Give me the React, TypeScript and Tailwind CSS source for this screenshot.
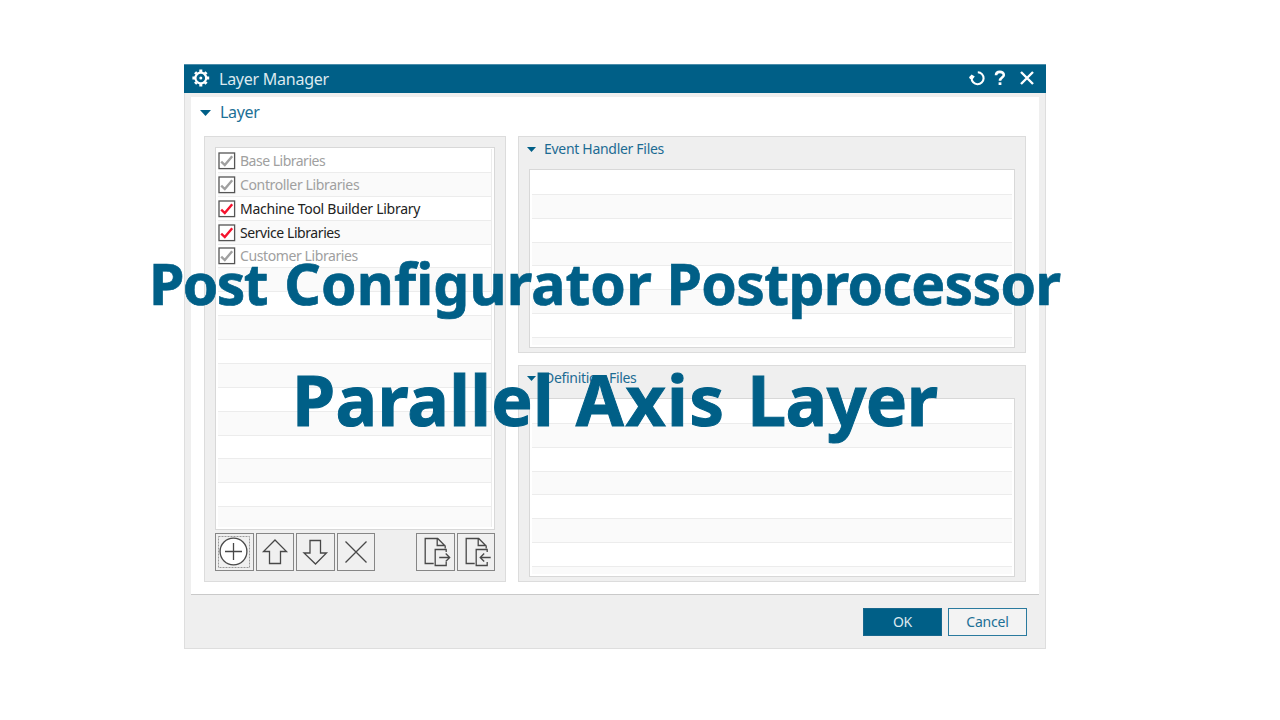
import type { ReactNode } from "react";

type Library = { name: string; enabled: boolean; spacing: string };

const libraries: Library[] = [
  { name: "Base Libraries", enabled: false, spacing: "tracking-[-0.5px]" },
  { name: "Controller Libraries", enabled: false, spacing: "tracking-[-0.36px]" },
  { name: "Machine Tool Builder Library", enabled: true, spacing: "tracking-[-0.26px]" },
  { name: "Service Libraries", enabled: true, spacing: "tracking-[-0.42px]" },
  { name: "Customer Libraries", enabled: false, spacing: "tracking-[-0.4px]" },
];

function Checkbox({ enabled }: { enabled: boolean }) {
  return (
    <svg width="18" height="18" viewBox="0 0 18 18" fill="none" className="mt-[1px] shrink-0">
      <rect x="1" y="1" width="15.6" height="15.6" fill="#fff" stroke="#555" strokeWidth="1.3" />
      <path d="M3.2 9.6 L6.8 13 L14.2 4.2" stroke={enabled ? "#f5122d" : "#a0a0a0"} strokeWidth="2.4" />
    </svg>
  );
}

function Caret({ className }: { className: string }) {
  return (
    <svg viewBox="0 0 11 6" preserveAspectRatio="none" className={className}>
      <path d="M0 0H11L5.5 6Z" fill="#005f87" />
    </svg>
  );
}

function ToolButton({ children, focused = false }: { children: ReactNode; focused?: boolean }) {
  return (
    <button className="h-[38px] w-[38.5px] shrink-0 border border-[#868686] bg-[#f0f0f0]">
      <svg width="36" height="36" viewBox="0 0 36 36" fill="none" stroke="#484848" strokeWidth="1.3">
        {focused && (
          <rect x="2.5" y="2.5" width="31" height="31" stroke="#999" strokeWidth="1" strokeDasharray="2 1" />
        )}
        {children}
      </svg>
    </button>
  );
}

function PagesIcon({ arrow }: { arrow: string }) {
  return (
    <g transform="translate(0.7 0)">
      <path d="M16 29.5H7.5V4.5H20L27.5 12V14.5M19.5 4.5V11.5H27.5" />
      <path d="M28.5 18V15.5H17.5V31.5H28.5V28" />
      <path d={arrow} />
    </g>
  );
}

function FilePanel({ title }: { title: string }) {
  return (
    <section className="flex h-[217px] flex-col border border-[#dcdcdc] bg-[#efefef] px-[10px] pb-[4px]">
      <h3 className="flex h-[32px] shrink-0 items-center pb-[8px] text-[14px] tracking-[-0.3px] text-[#1c6b93]">
        <Caret className="mt-[1px] mr-[8px] ml-[-2px] h-[5px] w-[9px]" />
        <span className="-mt-px">{title}</span>
      </h3>
      <div className="flex min-h-0 flex-1 flex-col overflow-hidden border border-[#d8d8d8] bg-white px-[2px] pt-[1px] pb-[2px]">
        {Array.from({ length: 8 }, (_, i) => (
          <div
            key={i}
            className={`h-[23.86px] border-[#ececec] ${i === 7 ? "shrink" : "shrink-0 border-b"} ${i % 2 ? "bg-[#fafafa]" : "bg-white"}`}
          />
        ))}
      </div>
    </section>
  );
}

export default function App() {
  return (
    <main className="relative h-[720px] w-[1280px] overflow-hidden bg-white pt-[64px] pl-[184px] font-['Noto_Sans',sans-serif]">
      <div className="flex h-[585px] w-[862px] flex-col border border-[#dedede] bg-[#efefef]">
        <header className="-mx-px -mt-px flex h-[29px] shrink-0 items-center border-t border-[#4c8daa] bg-[#005f87] pr-[11px] pl-[8px]">
          <svg width="18" height="18" viewBox="0 0 18 18" fill="none" stroke="#fff" className="-mt-[2px]">
            <circle cx="8.8" cy="9" r="5.4" strokeWidth="2.2" />
            <circle cx="8.8" cy="9" r="1.5" fill="#fff" stroke="none" />
            <path
              d="M8.8 .6v2.6M8.8 14.8v2.6M.4 9h2.6M14.6 9h2.6M3.1 3.3l1.5 1.5M13 13.2l1.5 1.5M14.5 3.3l-1.5 1.5M4.6 13.2l-1.5 1.5"
              strokeWidth="3"
            />
          </svg>
          <h1 className="ml-[9px] text-[16px] tracking-[-0.25px] text-[#dce9ef]">Layer Manager</h1>
          <div className="-mt-[2px] ml-auto flex items-center">
            <svg width="16" height="16" viewBox="0 0 16 16" fill="none">
              <path d="M8.8 2.2A6 6 0 1 1 2.6 8" stroke="#fff" strokeWidth="2.1" />
              <path d="M0 7.2L2.6 4.4L5.8 6.6L3.8 9H1Z" fill="#fff" />
            </svg>
            <svg width="12" height="16" viewBox="0 0 12 16" fill="none" className="ml-[9px]">
              <path d="M2 5.2C2 .8 9.8.8 9.8 5C9.8 7.6 6 7.6 6 10.8" stroke="#fff" strokeWidth="2.6" />
              <path d="M4.6 12.3h2.8v2.7H4.6z" fill="#fff" />
            </svg>
            <svg width="16" height="16" viewBox="0 0 16 16" className="ml-[13px]">
              <path d="M2 2 14 14M14 2 2 14" stroke="#fff" strokeWidth="2.4" />
            </svg>
          </div>
        </header>

        <div className="mx-[6px] mt-[4px] h-[498px] shrink-0 border-b border-[#c9c9c9] bg-white pr-[13px] pl-[13px]">
          <h2 className="flex h-[39px] items-center pb-[8px] text-[16px] tracking-[-0.3px] text-[#1c7096]">
            <Caret className="mr-[9px] ml-[-4px] h-[6px] w-[11px]" />
            <span className="-mt-[2px]">Layer</span>
          </h2>
          <div className="flex justify-between">
            <section className="h-[446px] w-[302px] border border-[#dcdcdc] bg-[#efefef] px-[10px] pt-[10px]">
              <div className="h-[383px] w-[280px] border border-[#d8d8d8] bg-white px-[2px] pt-[1px] pb-[2px]">
                <ul className="h-full overflow-hidden border-r border-[#ececec]">
                  {Array.from({ length: 16 }, (_, i) => {
                    const library = libraries[i];
                    return (
                      <li
                        key={i}
                        className={`flex h-[23.88px] items-center border-b border-[#ececec] text-[14px] ${i % 2 ? "bg-[#fafafa]" : "bg-white"}`}
                      >
                        {library && (
                          <>
                            <Checkbox enabled={library.enabled} />
                            <span
                              className={`ml-[4px] whitespace-nowrap ${library.spacing} ${library.enabled ? "text-[#222]" : "text-[#a0a0a0]"}`}
                            >
                              {library.name}
                            </span>
                          </>
                        )}
                      </li>
                    );
                  })}
                </ul>
              </div>
              <div className="mt-[3px] flex gap-[2px]">
                <ToolButton focused>
                  <circle cx="17.5" cy="17.5" r="13.4" fill="#fff" />
                  <path d="M17.5 9v17M9 17.5h17" />
                </ToolButton>
                <ToolButton>
                  <path d="M18 6 29.5 17.5H23.5V29.5H12.5V17.5H6.5Z" />
                </ToolButton>
                <ToolButton>
                  <path d="M13 6.5H23.5V19H29.5L18.5 30 7 19H13Z" />
                </ToolButton>
                <ToolButton>
                  <path d="M7.5 7.5 28.5 28.5M28.5 7.5 7.5 28.5" />
                </ToolButton>
                <div className="ml-auto flex gap-[2px]">
                  <ToolButton>
                    <PagesIcon arrow="M21.5 23.5H32M28 19.5l4 4-4 4" />
                  </ToolButton>
                  <ToolButton>
                    <PagesIcon arrow="M32 23.5H21.5M25.5 19.5l-4 4 4 4" />
                  </ToolButton>
                </div>
              </div>
            </section>
            <div className="flex w-[508px] flex-col gap-[12px]">
              <FilePanel title="Event Handler Files" />
              <FilePanel title="Definition Files" />
            </div>
          </div>
        </div>

        <footer className="flex justify-end gap-[6px] pt-[13px] pr-[18px] text-[14px] tracking-[-0.2px]">
          <button className="h-[28px] w-[79px] border border-[#17678d] bg-[#005f87] pb-[2px] text-[#dce9ef]">OK</button>
          <button className="h-[28px] w-[79px] border border-[#2a7a9e] bg-[#f3f3f3] pb-[2px] text-[#1c7096]">Cancel</button>
        </footer>
      </div>

      <p className="absolute top-[244px] left-[149px] text-[57px] leading-[78px] font-bold whitespace-nowrap text-[#005f87] [-webkit-text-stroke:0.7px_#005f87]">
        <span className="tracking-[-1.6px]">Post</span>{" "}
        <span className="ml-[2.4px] tracking-[0.15px]">Configurator</span>{" "}
        <span className="tracking-[-0.65px]">Postprocessor</span>
      </p>
      <p className="absolute top-[352px] left-[292px] text-[69.5px] leading-[94px] font-bold whitespace-nowrap text-[#005f87] [-webkit-text-stroke:1px_#005f87]">
        <span className="tracking-[0.3px]">Parallel</span>{" "}
        <span className="ml-[3.6px] tracking-[1.5px]">Axis</span>{" "}
        <span className="ml-[3.4px] tracking-[-0.5px]">Layer</span>
      </p>
    </main>
  );
}
